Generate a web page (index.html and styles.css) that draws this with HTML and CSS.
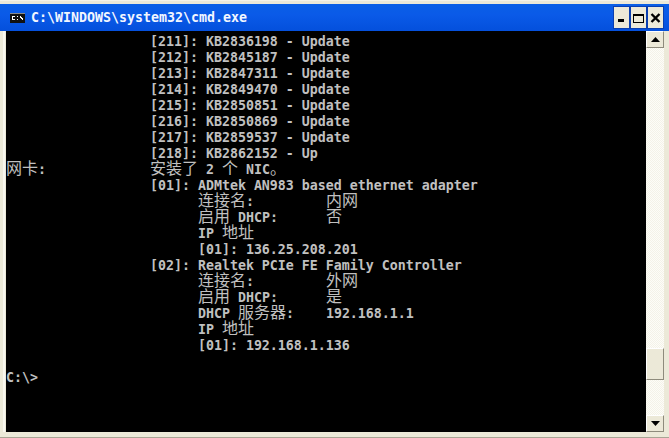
FILE: index.html
```html
<!DOCTYPE html>
<html lang="zh">
<head>
<meta charset="utf-8">
<title>cmd.exe</title>
<link rel="stylesheet" href="styles.css">
</head>
<body>
<div class="window">
  <header class="titlebar">
    <svg class="app-icon" width="15" height="10" viewBox="0 0 15 10"><rect width="15" height="10" fill="#111"/><rect width="15" height="1" fill="#8a8a8a"/><path d="M2 3h3v1H2zM2 4h1v2H2zM2 6h3v1H2zM7 3h1v1H7zM7 6h1v1H7zM10 3h1v1h1v1h1v2h-1V6h-1V5h-1z" fill="#fff"/></svg>
    <span class="title">C:\WINDOWS\system32\cmd.exe</span>
    <div class="controls">
      <button class="ctl"><svg width="15" height="21" viewBox="0 0 15 21"><rect x="4" y="12" width="6" height="3" fill="#000"/></svg></button>
      <button class="ctl"><svg width="15" height="21" viewBox="0 0 15 21"><path d="M2 7h11v9H2zM3 9v6h9V9z" fill="#000" fill-rule="evenodd"/></svg></button>
      <button class="ctl"><svg width="15" height="21" viewBox="0 0 15 21"><path d="M3.500 7l8 8M11.500 7l-8 8" stroke="#000" stroke-width="2.400" fill="none"/></svg></button>
    </div>
  </header>
  <div class="client">
    <main class="console">
<div class="line">                  [211]: KB2836198 - Update</div>
<div class="line">                  [212]: KB2845187 - Update</div>
<div class="line">                  [213]: KB2847311 - Update</div>
<div class="line">                  [214]: KB2849470 - Update</div>
<div class="line">                  [215]: KB2850851 - Update</div>
<div class="line">                  [216]: KB2850869 - Update</div>
<div class="line">                  [217]: KB2859537 - Update</div>
<div class="line">                  [218]: KB2862152 - Up</div>
<div class="line"><span class="zh">网卡</span>:             <span class="zh">安装了</span> 2 <span class="zh">个</span> NIC<span class="zh">。</span></div>
<div class="line">                  [01]: ADMtek AN983 based ethernet adapter</div>
<div class="line">                        <span class="zh">连接名</span>:         <span class="zh">内网</span></div>
<div class="line">                        <span class="zh">启用</span> DHCP:      <span class="zh">否</span></div>
<div class="line">                        IP <span class="zh">地址</span></div>
<div class="line">                        [01]: 136.25.208.201</div>
<div class="line">                  [02]: Realtek PCIe FE Family Controller</div>
<div class="line">                        <span class="zh">连接名</span>:         <span class="zh">外网</span></div>
<div class="line">                        <span class="zh">启用</span> DHCP:      <span class="zh">是</span></div>
<div class="line">                        DHCP <span class="zh">服务器</span>:    192.168.1.1</div>
<div class="line">                        IP <span class="zh">地址</span></div>
<div class="line">                        [01]: 192.168.1.136</div>
<div class="line"> </div>
<div class="line">C:\&gt;</div>
    </main>
    <aside class="scrollbar">
      <button class="arrow"><svg width="9" height="5" viewBox="0 0 9 5"><path d="M4.500 0L9 5H0z" fill="#000"/></svg></button>
      <div class="track"><div class="thumb"></div></div>
      <button class="arrow"><svg width="9" height="5" viewBox="0 0 9 5"><path d="M0 0h9L4.500 5z" fill="#000"/></svg></button>
    </aside>
  </div>
</div>
</body>
</html>
```
FILE: styles.css
```css
html, body { margin: 0; padding: 0; background: #ece9d8; }
.window {
  width: 669px; height: 438px; box-sizing: border-box;
  display: flex; flex-direction: column;
  background: #ece9d8;
  padding: 0 5px 5px 3px;
  border-top: 1px solid #f5f3e8;
  border-bottom: 1px solid #a8a594;
}
.titlebar {
  height: 27px; margin: 3px -5px 0 -3px; padding: 0 6px 0 10px;
  flex: none; display: flex; align-items: center; gap: 6px;
  background: linear-gradient(#0a5fe6, #0a5ae8 40%, #0450dc);
}
.app-icon { flex: none; }
.title {
  font: bold 13.29px/16px "DejaVu Sans Mono", monospace;
  color: #f2f6ff; white-space: pre;
}
.controls { margin-left: auto; display: flex; gap: 2px; }
.ctl {
  width: 15px; height: 21px; padding: 0; border: 0; display: block;
  background: #ece9d8;
  box-shadow: 0 0 0 1px #0a3fb0;
}
.ctl svg { display: block; }
.client { flex: 1; display: flex; min-height: 0; border-left: 2px solid #f8f7ef; padding-left: 1px; }
.console {
  flex: 1; background: #000; color: #c0c0c0; padding-top: 3px; overflow: hidden;
  font: bold 13.29px/16px "DejaVu Sans Mono", monospace;
}
.line { height: 16px; white-space: pre; }
.zh { font: 400 16px/0 "Noto Sans CJK SC", sans-serif; }
.scrollbar {
  width: 18px; flex: none; display: flex; flex-direction: column;
  background: repeating-conic-gradient(#f4f2e8 0 25%, #fdfdf8 0 50%) 0 0 / 2px 2px;
}
.arrow {
  height: 17px; padding: 0; flex: none; display: flex; align-items: center; justify-content: center;
  background: #ece9d8; border: 1px solid; border-color: #fff #8e8b7c #8e8b7c #fff;
}
.track { flex: 1; display: flex; flex-direction: column; justify-content: flex-end; padding-bottom: 35px; }
.thumb { height: 30px; background: #ece9d8; border: 1px solid; border-color: #fff #8e8b7c #8e8b7c #fff; }
```
